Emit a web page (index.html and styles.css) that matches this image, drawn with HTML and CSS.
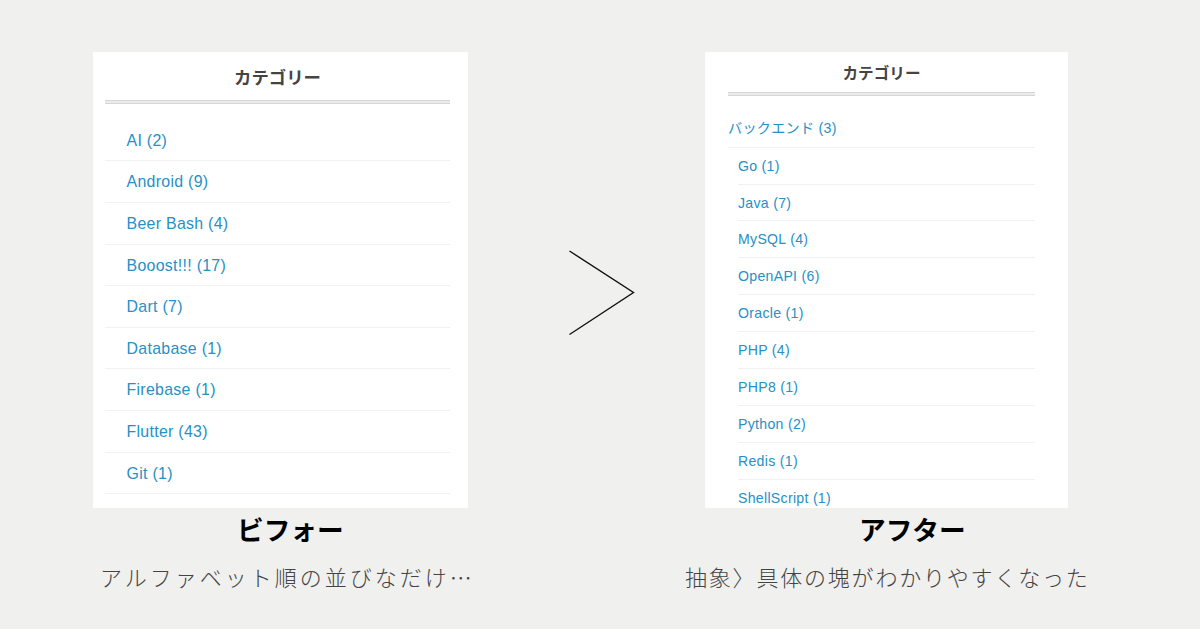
FILE: index.html
```html
<!DOCTYPE html>
<html lang="ja">
<head>
<meta charset="utf-8">
<title>カテゴリー ビフォー アフター</title>
<link rel="stylesheet" href="styles.css">
</head>
<body>
<main class="page">
  <section class="col col-before">
    <div class="card card-before">
      <h2 class="card-title">カテゴリー</h2>
      <ul class="cats">
        <li><a>AI (2)</a></li>
        <li><a>Android (9)</a></li>
        <li><a>Beer Bash (4)</a></li>
        <li><a>Booost!!! (17)</a></li>
        <li><a>Dart (7)</a></li>
        <li><a>Database (1)</a></li>
        <li><a>Firebase (1)</a></li>
        <li><a>Flutter (43)</a></li>
        <li><a>Git (1)</a></li>
      </ul>
    </div>
    <h3 class="cap-title">ビフォー</h3>
    <p class="cap-note">アルファベット順の並びなだけ…</p>
  </section>
  <div class="arrow">
    <svg width="66" height="86" viewBox="0 0 66 86" fill="none" stroke="#111" stroke-width="1.4"><path d="M0.5 1 64.5 42.5 0.5 84.5"/></svg>
  </div>
  <section class="col col-after">
    <div class="card card-after">
      <h2 class="card-title">カテゴリー</h2>
      <div class="parent"><a>バックエンド (3)</a></div>
      <ul class="cats">
        <li><a>Go (1)</a></li>
        <li><a>Java (7)</a></li>
        <li><a>MySQL (4)</a></li>
        <li><a>OpenAPI (6)</a></li>
        <li><a>Oracle (1)</a></li>
        <li><a>PHP (4)</a></li>
        <li><a>PHP8 (1)</a></li>
        <li><a>Python (2)</a></li>
        <li><a>Redis (1)</a></li>
        <li><a>ShellScript (1)</a></li>
      </ul>
    </div>
    <h3 class="cap-title">アフター</h3>
    <p class="cap-note">抽象〉具体の塊がわかりやすくなった</p>
  </section>
</main>
</body>
</html>
```
FILE: styles.css
```css
* { box-sizing: border-box; }
html, body { margin: 0; height: 100%; }
body {
  background: #f0f0ef;
  font-family: "Liberation Sans", "Noto Sans CJK JP", sans-serif;
  overflow: hidden;
}
.page {
  display: flex;
  align-items: flex-start;
  padding: 52px 0 0 93px;
}
.col { flex: none; }
.col-before { width: 375px; }
.col-after { width: 363px; }
.arrow {
  flex: none;
  width: 66px;
  margin: 198px 70px 0 101px;
  line-height: 0;
}
.card {
  background: #fff;
  height: 456px;
  overflow: hidden;
}
.card a { color: #2790c6; }
.cats { list-style: none; margin: 0; padding: 0; }
.card-title {
  margin: 0;
  text-align: center;
  font-family: "Noto Sans CJK JP", sans-serif;
  font-weight: 700;
  color: #444;
  background: linear-gradient(#ececec, #ececec) left bottom / 100% 4px no-repeat;
  background-origin: border-box;
  border-bottom: 4px double #d6d6d6;
}
.card-before { padding: 0 18px 0 12px; }
.card-before .card-title {
  font-size: 17.4px;
  line-height: 25px;
  padding: 12px 0 10px;
  height: 51.5px;
}
.card-before .cats { margin-top: 16.3px; }
.card-before li {
  height: 41.6px;
  line-height: 41px;
  padding-left: 21.5px;
  border-bottom: 1px solid #f1f1f1;
  font-size: 15.9px;
  letter-spacing: 0.3px;
}
.card-after { padding: 0 33px 0 23px; }
.card-after .card-title {
  font-size: 15.6px;
  line-height: 22px;
  padding: 9px 0 9px;
  height: 44px;
}
.parent {
  margin-top: 14.7px;
  height: 37px;
  line-height: 35px;
  border-bottom: 1px solid #f1f1f1;
  font-size: 14.1px;
  letter-spacing: 0.3px;
}
.card-after .cats { margin-left: 10px; }
.card-after li {
  height: 36.9px;
  line-height: 36px;
  border-bottom: 1px solid #f1f1f1;
  font-size: 14.1px;
  letter-spacing: 0.3px;
}
.cap-title {
  margin: 6px 0 0;
  font-family: "Noto Sans CJK JP", sans-serif;
  font-weight: 700;
  font-size: 26.7px;
  line-height: 30px;
  color: #000;
}
.cap-note {
  margin: 16px 0 0;
  font-family: "Noto Sans CJK JP", sans-serif;
  font-weight: 300;
  color: #444;
  white-space: nowrap;
}
.col-before .cap-title { padding-left: 144px; }
.col-before .cap-note { padding-left: 7px; font-size: 22px; letter-spacing: 3px; }
.col-after .cap-title { padding-left: 154px; }
.col-after .cap-note { margin-left: -20px; font-size: 22px; letter-spacing: 1.8px; }
```
